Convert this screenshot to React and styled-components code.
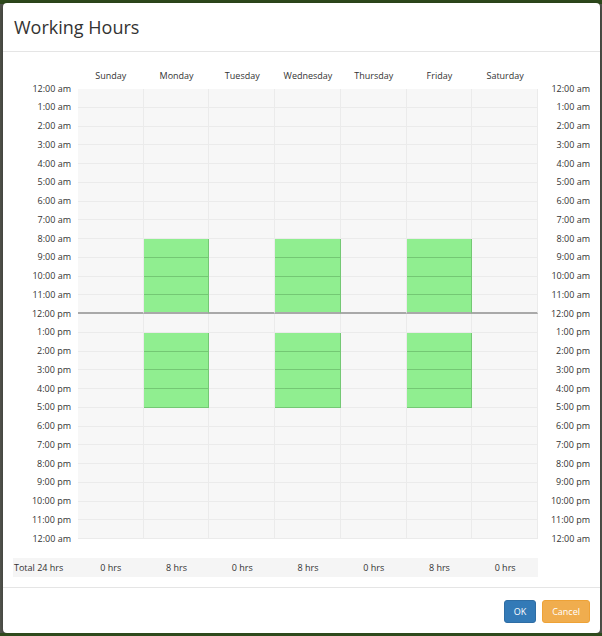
import React from 'react';
import styled, { createGlobalStyle } from 'styled-components';

const GlobalStyle = createGlobalStyle`
  html, body {
    margin: 0;
    padding: 0;
  }
  body {
    background: linear-gradient(#2e4a1c 0, #2e4a1c 4px, #55574f 4px, #5a5c55 100%);
    font-family: "Open Sans", "Liberation Sans", sans-serif;
    color: #333;
  }
`;

const ROW_H = 18.75;

const Modal = styled.div`
  box-sizing: border-box;
  width: 597px;
  margin: 3px 0 0 3px;
  background: #fff;
  border-radius: 4px;
  box-shadow: 0 2px 6px rgba(0, 0, 0, 0.45);
`;

const Header = styled.div`
  height: 48px;
  display: flex;
  align-items: center;
  padding: 0 11px;
  border-bottom: 1px solid #e5e5e5;
`;

const Title = styled.h4`
  margin: 0;
  font-size: 18px;
  font-weight: 400;
  color: #333;
`;

const Body = styled.div`
  padding: 13px 10px 10px;
  display: grid;
  grid-template-columns: 65px repeat(7, 1fr) 52px;
`;

const DayHead = styled.div`
  height: 22px;
  line-height: 22px;
  margin-bottom: 2px;
  text-align: center;
  font-size: 9px;
`;

const Labels = styled.div`
  display: flex;
  flex-direction: column;
  margin: -${ROW_H / 2}px 0;
  align-items: flex-end;
  padding-right: ${(p) => (p.$side === 'left' ? '7px' : '0')};
`;

const Label = styled.div`
  height: ${ROW_H}px;
  line-height: ${ROW_H}px;
  font-size: 9px;
  white-space: nowrap;
`;

const DayCol = styled.div`
  display: flex;
  flex-direction: column;
`;

const Cell = styled.div`
  box-sizing: border-box;
  height: ${ROW_H}px;
  background: ${(p) => (p.$on ? '#90ee90' : '#f7f7f7')};
  border-right: 1px solid ${(p) => (p.$on ? '#74c874' : '#ebebeb')};
  border-bottom: ${(p) =>
    p.$noon ? '2px solid #a9a9a9' : `1px solid ${p.$on ? '#74c874' : '#ebebeb'}`};
`;

const Totals = styled.div`
  grid-column: 1 / 9;
  margin-top: 19px;
  height: 19px;
  display: grid;
  grid-template-columns: 65px repeat(7, 1fr);
  align-items: center;
  background: #f5f5f5;
  font-size: 9px;
`;

const TotalLabel = styled.div`
  padding-left: 1px;
`;

const TotalVal = styled.div`
  text-align: center;
`;

const Footer = styled.div`
  border-top: 1px solid #e5e5e5;
  padding: 12px 10px 10px;
  display: flex;
  justify-content: flex-end;
  gap: 6px;
`;

const Button = styled.button`
  height: 23px;
  padding: 0 9px;
  border-radius: 3px;
  font-family: "Open Sans", "Liberation Sans", sans-serif;
  font-size: 9px;
  color: #fff;
  background: ${(p) => (p.$variant === 'primary' ? '#337ab7' : '#f0ad4e')};
  border: 1px solid ${(p) => (p.$variant === 'primary' ? '#2e6da4' : '#eea236')};
  cursor: pointer;
`;

const days = ['Sunday', 'Monday', 'Tuesday', 'Wednesday', 'Thursday', 'Friday', 'Saturday'];
const workDays = [1, 3, 5];
const isWork = (d, h) => workDays.includes(d) && ((h >= 8 && h < 12) || (h >= 13 && h < 17));

const hourLabel = (i) => {
  const h = i % 24;
  const suffix = h < 12 ? 'am' : 'pm';
  const n = h % 12 === 0 ? 12 : h % 12;
  return `${n}:00 ${suffix}`;
};

const labels = Array.from({ length: 25 }, (_, i) => hourLabel(i));
const hours = Array.from({ length: 24 }, (_, i) => i);

export default function App() {
  return (
    <>
      <GlobalStyle />
      <Modal>
        <Header>
          <Title>Working Hours</Title>
        </Header>
        <Body>
          <div />
          {days.map((d) => (
            <DayHead key={d}>{d}</DayHead>
          ))}
          <div />

          <Labels $side="left">
            {labels.map((l, i) => (
              <Label key={i}>{l}</Label>
            ))}
          </Labels>
          {days.map((d, di) => (
            <DayCol key={d}>
              {hours.map((h) => (
                <Cell key={h} $on={isWork(di, h)} $noon={h === 11} />
              ))}
            </DayCol>
          ))}
          <Labels $side="right">
            {labels.map((l, i) => (
              <Label key={i}>{l}</Label>
            ))}
          </Labels>

          <Totals>
            <TotalLabel>Total 24 hrs</TotalLabel>
            {days.map((d, di) => (
              <TotalVal key={d}>{workDays.includes(di) ? '8 hrs' : '0 hrs'}</TotalVal>
            ))}
          </Totals>
        </Body>
        <Footer>
          <Button $variant="primary">OK</Button>
          <Button $variant="warning">Cancel</Button>
        </Footer>
      </Modal>
    </>
  );
}
